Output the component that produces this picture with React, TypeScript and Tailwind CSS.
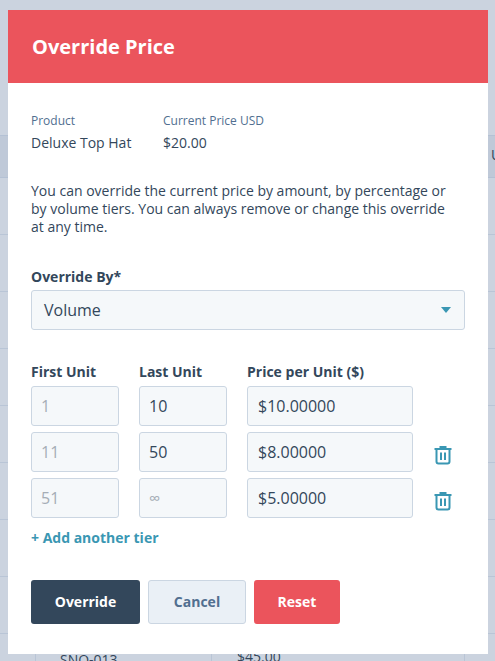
const rows = [
  { first: "1", last: "10", price: "$10.00000", removable: false },
  { first: "11", last: "50", price: "$8.00000", removable: true },
  { first: "51", last: "∞", price: "$5.00000", removable: true },
];

function TrashIcon() {
  return (
    <svg width="18" height="19" viewBox="0 0 18 19" fill="none" stroke="#3a97b3" strokeWidth="2">
      <path d="M0.5 3h17" />
      <path d="M6.5 2.5V1h5v1.5" />
      <path d="M2.5 3v12.5a2 2 0 0 0 2 2h9a2 2 0 0 0 2-2V3" />
      <path d="M7 6.5v7.5M11 6.5v7.5" />
    </svg>
  );
}

export default function App() {
  return (
    <div className="relative h-[661px] w-[495px] overflow-hidden bg-[#cbd3df] font-['Open_Sans',sans-serif]">
      {/* table behind the modal */}
      <div className="pt-[135px]">
        <div className="flex h-[43px] items-center justify-end border-y border-[#b4c1d4] bg-[#bfc9d8] pb-1 text-sm text-[#33475b]">
          <span className="w-[4px] overflow-hidden">U</span>
        </div>
        {[0, 1, 2, 3, 4, 5, 6, 7].map((i) => (
          <div key={i} className="h-[57px] border-b border-[#b9c5d6]" />
        ))}
        <div className="ml-[35px] flex h-[30px] text-sm text-[#33475b]">
          <div className="w-[176px] border-l border-[#b9c5d6] pl-6 pt-[16px]">SNO-013</div>
          <div className="w-[254px] border-x border-[#b9c5d6] pl-[25px] pt-[13px]">$45.00</div>
        </div>
      </div>
      <div className="absolute left-2 top-[10px] w-[480px] bg-white">
        <div className="flex h-[73px] items-center bg-[#eb545c] px-6 text-xl font-bold text-white">Override Price</div>
        <div className="px-[23px] pt-[30px]">
          <div className="flex text-[#33475b]">
            <div className="w-[132px]">
              <div className="text-xs text-[#516f90]">Product</div>
              <div className="mt-1 text-sm">Deluxe Top Hat</div>
            </div>
            <div>
              <div className="text-xs text-[#516f90]">Current Price USD</div>
              <div className="mt-1 text-sm">$20.00</div>
            </div>
          </div>
          <p className="mt-[29px] w-[430px] text-sm leading-[18px] text-[#33475b]">
            You can override the current price by amount, by percentage or by volume tiers. You can always remove or change this override at any time.
          </p>
          <label className="mt-[31px] block text-sm font-bold text-[#33475b]">Override By*</label>
          <div className="mt-[3px] flex h-10 w-[434px] items-center justify-between rounded-[3px] border border-[#cbd6e2] bg-[#f5f8fa] pl-3 pr-[13px] text-base text-[#33475b]">
            Volume
            <span className="h-0 w-0 border-x-[5px] border-t-[6px] border-x-transparent border-t-[#3a97b3]" />
          </div>
          <div className="mt-8 flex text-sm font-bold text-[#33475b]">
            <div className="w-[108px]">First Unit</div>
            <div className="w-[108px]">Last Unit</div>
            <div>Price per Unit ($)</div>
          </div>
          <div className="mt-1 flex flex-col gap-[6px]">
            {rows.map((r) => (
              <div key={r.first} className="flex">
                <div className="flex h-10 w-[88px] items-center rounded-[3px] border border-[#cbd6e2] bg-[#f5f8fa] pl-[9px] text-base text-[#a5adb6]">{r.first}</div>
                <div className={`ml-5 flex h-10 w-[88px] items-center rounded-[3px] border border-[#cbd6e2] bg-[#f5f8fa] pl-[9px] text-base ${r.last === "∞" ? "text-[#a5adb6]" : "text-[#33475b]"}`}>{r.last}</div>
                <div className="ml-5 flex h-10 w-[166px] items-center rounded-[3px] border border-[#cbd6e2] bg-[#f5f8fa] pl-2.5 text-base text-[#33475b]">{r.price}</div>
                {r.removable && <div className="ml-[21px] mt-[14px] flex"><TrashIcon /></div>}
              </div>
            ))}
          </div>
          <div className="mt-[10px] text-sm font-bold text-[#3a97b3]">+ Add another tier</div>
          <div className="mt-8 flex gap-2 pb-[30px] text-sm font-bold">
            <button className="h-11 w-[109px] rounded-[3px] bg-[#33475b] text-white">Override</button>
            <button className="h-11 w-[98px] rounded-[3px] border border-[#cbd6e2] bg-[#eaf0f6] text-[#516f90]">Cancel</button>
            <button className="h-11 w-[86px] rounded-[3px] bg-[#eb545c] text-white">Reset</button>
          </div>
        </div>
      </div>
    </div>
  );
}
